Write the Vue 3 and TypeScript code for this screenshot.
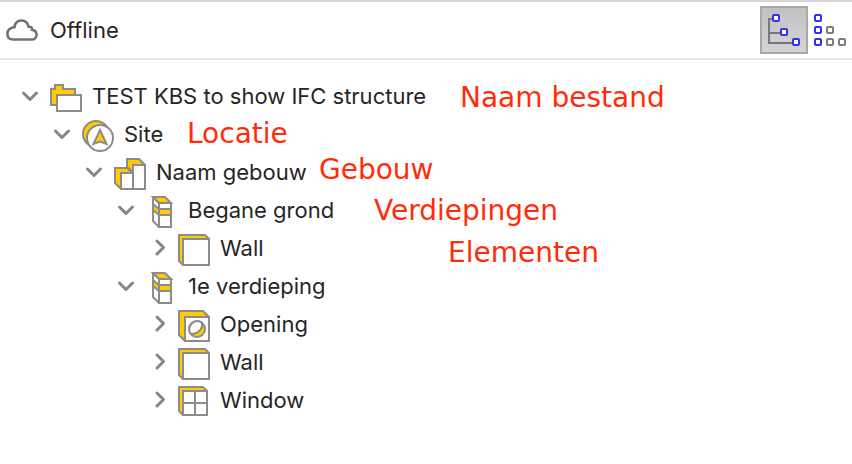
<script setup lang="ts">
import { computed, ref } from 'vue'

type Kind = 'project' | 'site' | 'building' | 'storey' | 'wall' | 'opening' | 'window'

interface TreeRow {
  id: number
  label: string
  kind: Kind
  depth: number
}

interface Note {
  text: string
  x: number
  y: number
}

const rows: TreeRow[] = [
  { id: 1, label: 'TEST KBS to show IFC structure', kind: 'project', depth: 0 },
  { id: 2, label: 'Site', kind: 'site', depth: 1 },
  { id: 3, label: 'Naam gebouw', kind: 'building', depth: 2 },
  { id: 4, label: 'Begane grond', kind: 'storey', depth: 3 },
  { id: 5, label: 'Wall', kind: 'wall', depth: 4 },
  { id: 6, label: '1e verdieping', kind: 'storey', depth: 3 },
  { id: 7, label: 'Opening', kind: 'opening', depth: 4 },
  { id: 8, label: 'Wall', kind: 'wall', depth: 4 },
  { id: 9, label: 'Window', kind: 'window', depth: 4 },
]

const notes: Note[] = [
  { text: 'Naam bestand', x: 460, y: 80 },
  { text: 'Locatie', x: 187, y: 116 },
  { text: 'Gebouw', x: 319, y: 152 },
  { text: 'Verdiepingen', x: 374, y: 193 },
  { text: 'Elementen', x: 448, y: 235 },
]

const open = ref(new Set<number>([1, 2, 3, 4, 6]))
const view = ref<'tree' | 'list'>('tree')

const visibleRows = computed(() => {
  const shown: TreeRow[] = []
  let closedDepth = Infinity
  for (const row of rows) {
    if (row.depth > closedDepth) continue
    closedDepth = open.value.has(row.id) ? Infinity : row.depth
    shown.push(row)
  }
  return shown
})

function toggle(id: number) {
  const next = new Set(open.value)
  if (!next.delete(id)) next.add(id)
  open.value = next
}
</script>

<template>
  <div class="panel">
    <header class="bar">
      <svg class="cloud" viewBox="0 0 32 24" aria-hidden="true">
        <path d="M7 21.600H25.500C28.600 21.600 30.600 19.700 30.600 17C30.600 14.300 28.800 12.200 26 11.800C26.200 9.300 24.800 8.600 22.600 8.700C21.600 4.800 19 2.600 15.600 2.600C11.600 2.600 8.900 5.200 8.400 9.300C4.200 9.800 1.400 12.200 1.400 15.800C1.400 19.400 3.600 21.600 7 21.600Z" />
      </svg>
      <span class="status">Offline</span>
      <button class="view" :class="{ active: view === 'tree' }" type="button" aria-label="Tree view" @click="view = 'tree'">
        <svg class="view-icon" viewBox="0 0 36 36" aria-hidden="true">
          <path class="branch" d="M8 7H3V31H28M3 21H16" />
          <rect class="node" x="7" y="3" width="6" height="6" rx="1" />
          <rect class="node" x="15" y="17" width="6" height="6" rx="1" />
          <rect class="node" x="27" y="27" width="6" height="6" rx="1" />
        </svg>
      </button>
      <button class="view" :class="{ active: view === 'list' }" type="button" aria-label="List view" @click="view = 'list'">
        <svg class="view-icon" viewBox="0 0 36 36" aria-hidden="true">
          <rect class="node" x="3" y="3" width="6" height="6" rx="1" />
          <rect class="node" x="3" y="15" width="6" height="6" rx="1" />
          <rect class="node" x="3" y="27" width="6" height="6" rx="1" />
          <rect class="node dim" x="15" y="15" width="6" height="6" rx="1" />
          <rect class="node dim" x="15" y="27" width="6" height="6" rx="1" />
          <rect class="node dim" x="27" y="27" width="6" height="6" rx="1" />
        </svg>
      </button>
    </header>

    <main class="content">
      <ul class="tree" role="tree">
        <li
          v-for="row in visibleRows"
          :key="row.id"
          class="row"
          role="treeitem"
          :aria-level="row.depth + 1"
          :aria-expanded="open.has(row.id)"
          :style="{ paddingLeft: `${20 + row.depth * 32}px` }"
        >
          <button class="toggle" type="button" :aria-label="`Toggle ${row.label}`" @click="toggle(row.id)">
            <svg class="chevron" viewBox="0 0 20 20" aria-hidden="true">
              <path v-if="open.has(row.id)" d="M3.500 7L10 13.500L16.500 7" />
              <path v-else d="M9 3L15.500 9.500L9 16" />
            </svg>
          </button>
          <svg class="icon" viewBox="0 0 32 32" aria-hidden="true">
            <g v-if="row.kind === 'project'">
              <path class="fill" d="M1 7H5V3H13V7H25V23H1Z" />
              <rect class="face" x="7" y="13" width="24" height="16" />
            </g>
            <g v-else-if="row.kind === 'site'">
              <circle class="fill" cx="14" cy="14" r="13" />
              <circle class="face" cx="18" cy="18" r="13" />
              <path class="fill" d="M18 10L24.500 24L18 21.500L11.500 24Z" />
            </g>
            <g v-else-if="row.kind === 'building'">
              <path class="fill" d="M13 1H25L31 7H19V14L13 9Z" />
              <path class="fill" d="M1 10H13L19 15H7V31L1 25Z" />
              <rect class="face" x="7" y="15" width="12" height="16" />
              <rect class="face" x="19" y="7" width="12" height="24" />
            </g>
            <g v-else-if="row.kind === 'storey'">
              <path class="face" d="M7 1L13 7V31L7 25Z" />
              <rect class="face" x="13" y="7" width="12" height="24" />
              <path class="fill" d="M7 1H19L25 7H13Z" />
              <path class="fill" d="M7 8L13 13H25V19H13L7 14Z" />
              <path class="line" d="M13 7V31" />
            </g>
            <g v-else-if="row.kind === 'opening'">
              <path class="fill" d="M1 1H25L31 7V31H7L1 25Z" />
              <rect class="face" x="7" y="7" width="24" height="24" />
              <circle class="fill" cx="19" cy="19" r="8" />
              <path class="face" d="M24 12.800A9.500 9.500 0 0 1 12.500 23.500A8 8 0 0 1 24 12.800Z" />
            </g>
            <g v-else-if="row.kind === 'wall'">
              <path class="fill" d="M1 1H27L31 5V31H5L1 27Z" />
              <rect class="face" x="5" y="5" width="26" height="26" />
            </g>
            <g v-else>
              <path class="fill" d="M1 1H25L29 5V29H5L1 25Z" />
              <rect class="face" x="5" y="5" width="24" height="24" />
              <path class="line" d="M17 5V29M5 17H29" />
            </g>
          </svg>
          <span class="label">{{ row.label }}</span>
        </li>
      </ul>
    </main>

    <span
      v-for="note in notes"
      :key="note.text"
      class="note"
      :style="{ left: `${note.x}px`, top: `${note.y}px` }"
    >{{ note.text }}</span>
  </div>
</template>

<style>
body {
  background: #ffffff;
}
</style>

<style scoped>
.panel {
  position: relative;
  min-height: 100vh;
  box-sizing: border-box;
  border-top: 2px solid #dad1da;
  background: #ffffff;
  color: #262626;
  font-family: Inter, "Liberation Sans", sans-serif;
  font-size: 22px;
  line-height: 32px;
}

.bar {
  display: flex;
  align-items: center;
  height: 56px;
  padding-left: 6px;
  border-bottom: 2px solid #e4e4e4;
}

.cloud {
  width: 32px;
  height: 24px;
  margin-right: 12px;
  fill: none;
  stroke: #707070;
  stroke-width: 2.500;
}

.status {
  flex: 1;
}

.view {
  display: flex;
  align-items: center;
  justify-content: center;
  width: 48px;
  height: 48px;
  padding: 0;
  border: 2px solid transparent;
  background: none;
}

.view:last-child {
  width: 44px;
}

.view.active {
  border-color: #a8a8a8;
  background: linear-gradient(#c2c2c2, #d4d4d4);
}

.view-icon {
  flex: none;
  width: 36px;
  height: 36px;
}

.branch {
  fill: none;
  stroke: #777777;
  stroke-width: 2;
}

.node {
  fill: #ffffff;
  stroke: #3030f0;
  stroke-width: 2;
}

.node.dim {
  stroke: #7c7c7c;
}

.content {
  padding-top: 19px;
}

.tree {
  margin: 0;
  padding: 0;
  list-style: none;
}

.row {
  display: flex;
  align-items: center;
  height: 38px;
}

.toggle {
  width: 20px;
  height: 20px;
  margin: 0 10px 4px 0;
  padding: 0;
  border: 0;
  background: none;
}

.chevron {
  display: block;
  width: 20px;
  height: 20px;
  fill: none;
  stroke: #858585;
  stroke-width: 3;
  stroke-linecap: round;
  stroke-linejoin: round;
}

.icon {
  width: 32px;
  height: 32px;
  margin-right: 10px;
  stroke: #8c8c8c;
  stroke-width: 2;
}

.fill {
  fill: #ffcc00;
}

.face {
  fill: #ffffff;
}

.line {
  fill: none;
}

.label {
  padding-bottom: 4px;
  white-space: nowrap;
}

.note {
  position: absolute;
  color: #ff2c0a;
  font-family: "DejaVu Sans", sans-serif;
  font-size: 28px;
  white-space: nowrap;
}
</style>
